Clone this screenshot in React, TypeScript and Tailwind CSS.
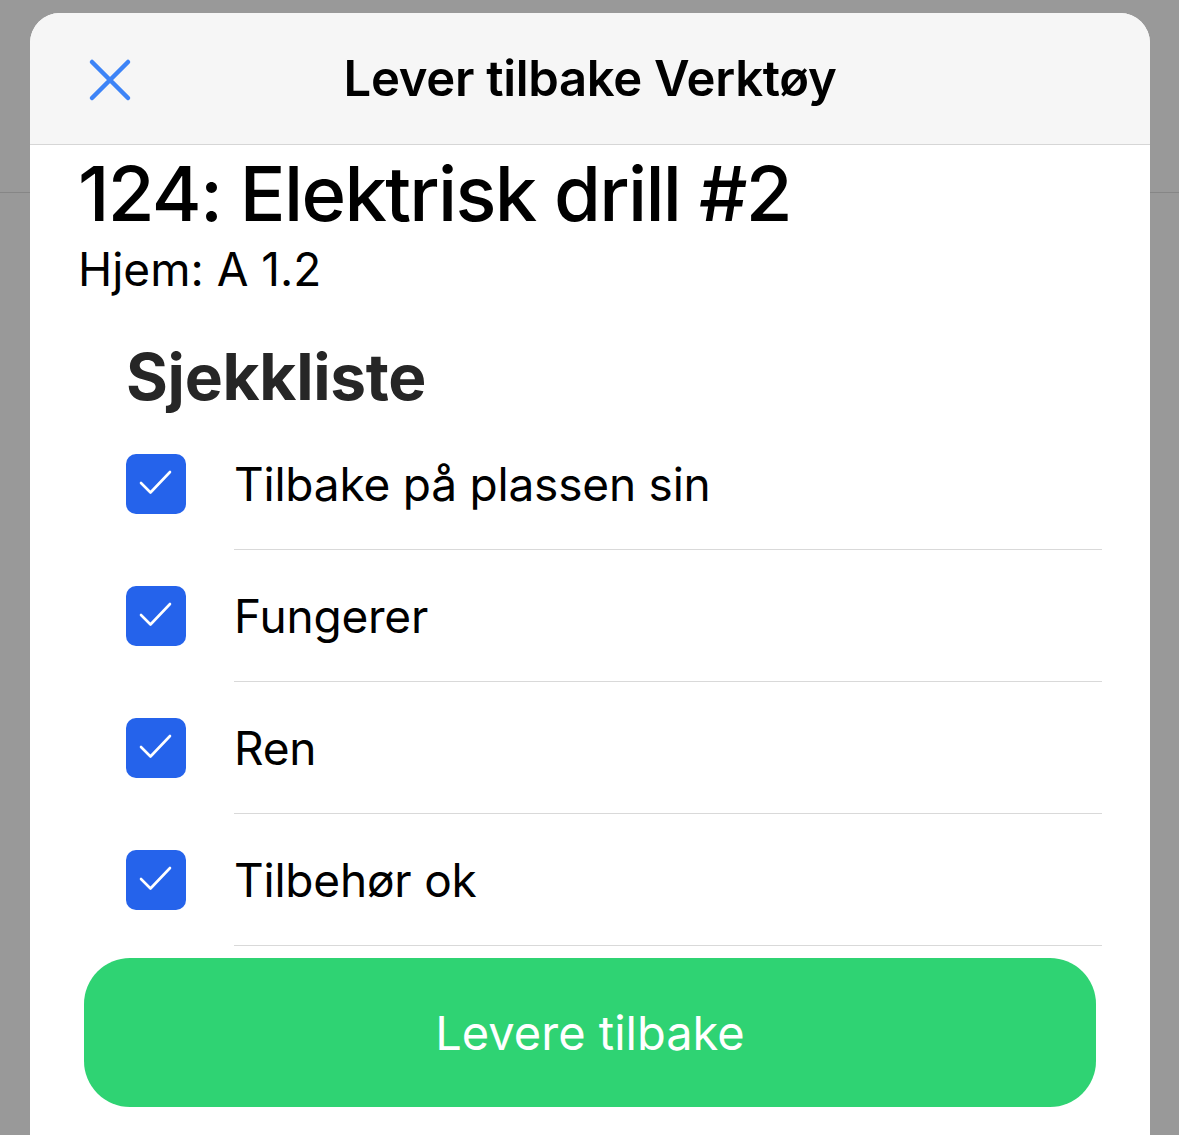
import React from "react";

const items = ["Tilbake på plassen sin", "Fungerer", "Ren", "Tilbehør ok"];

const font = { fontFamily: "Inter, 'Noto Sans', sans-serif" };

const CheckBox: React.FC = () => (
  <div className="w-[60px] h-[60px] rounded-[10px] bg-[#2563eb] shrink-0 flex items-center justify-center">
    <svg width="60" height="60" viewBox="0 0 60 60" fill="none">
      <path d="M15 29 L24.5 38.5 L44 18" stroke="white" strokeWidth="2.6" strokeLinecap="round" strokeLinejoin="round" />
    </svg>
  </div>
);

export default function App() {
  return (
    <div className="relative w-[1179px] h-[1135px] bg-[#999999] overflow-hidden" style={font}>
      {/* page behind the sheet */}
      <div className="h-[193px] border-b border-[#868686]" />

      {/* Sheet */}
      <div className="absolute left-[30px] top-[13px] w-[1120px] h-[1122px] bg-white rounded-t-[30px] overflow-hidden flex flex-col">
        {/* Header */}
        <div className="relative h-[132px] bg-[#f6f6f6] border-b border-[#d6d6d6] flex items-center justify-center shrink-0">
          <button className="absolute left-[58px] top-[45px] w-[44px] h-[44px] flex items-center justify-center">
            <svg width="44" height="44" viewBox="0 0 44 44" fill="none">
              <path d="M4 4 L40 40 M40 4 L4 40" stroke="#3d84f7" strokeWidth="4.5" strokeLinecap="round" />
            </svg>
          </button>
          <h1 className="text-[49px] font-semibold text-black tracking-[-0.3px] leading-none">Lever tilbake Verktøy</h1>
        </div>

        {/* Content */}
        <div className="px-[48px] pt-[4px]">
          <h2 className="text-[76px] font-medium text-black leading-[88px] tracking-[-1.7px]">124: Elektrisk drill #2</h2>
          <p className="text-[46px] text-black leading-[56px] mt-[4px]">Hjem: A 1.2</p>
        </div>

        <div className="pl-[96px] pr-[48px] mt-[42px]">
          <h3 className="text-[64px] font-bold text-[#262626] leading-[76px] tracking-[-0.3px]">Sjekkliste</h3>
          <div className="mt-[3px]">
            {items.map((item) => (
              <div key={item} className="flex items-center">
                <CheckBox />
                <div className="ml-[48px] flex-1 h-[132px] border-b border-[#d9d9d9] flex items-center">
                  <span className="text-[46px] text-black leading-none tracking-[-0.2px]">{item}</span>
                </div>
              </div>
            ))}
          </div>
        </div>

        <div className="px-[54px] mt-[12px]">
          <button className="w-full h-[149px] rounded-[46px] bg-[#2fd373] flex items-center justify-center">
            <span className="text-[47px] text-white leading-none">Levere tilbake</span>
          </button>
        </div>
      </div>
    </div>
  );
}
